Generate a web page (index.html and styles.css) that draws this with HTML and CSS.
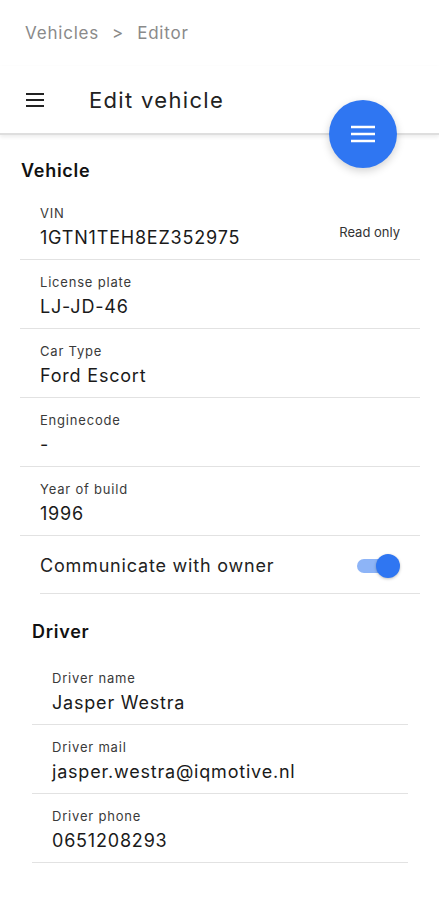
FILE: index.html
```html
<!DOCTYPE html>
<html lang="en">
<head>
  <meta charset="UTF-8">
  <title>Edit vehicle</title>
  <link rel="stylesheet" href="styles.css">
</head>
<body>

  <div class="breadcrumb">
    <span>Vehicles</span>
    <span class="sep">&gt;</span>
    <span>Editor</span>
  </div>

  <header class="toolbar">
    <svg class="menu-icon" width="24" height="24" viewBox="0 0 24 24">
      <path d="M3 6h18M3 12h18M3 18h18" stroke="#222" stroke-width="2"/>
    </svg>
    <h1>Edit vehicle</h1>
    <button class="fab">
      <svg width="26" height="18" viewBox="0 0 26 18">
        <path d="M1 2h24M1 9h24M1 16h24" stroke="#fff" stroke-width="2.4"/>
      </svg>
    </button>
  </header>

  <main>
    <section class="group vehicle">
      <h2>Vehicle</h2>

      <div class="field">
        <div class="field-text">
          <label>VIN</label>
          <div class="value">1GTN1TEH8EZ352975</div>
        </div>
        <span class="hint">Read only</span>
      </div>
      <div class="field">
        <div class="field-text">
          <label>License plate</label>
          <div class="value">LJ-JD-46</div>
        </div>
      </div>
      <div class="field">
        <div class="field-text">
          <label>Car Type</label>
          <div class="value">Ford Escort</div>
        </div>
      </div>
      <div class="field">
        <div class="field-text">
          <label>Enginecode</label>
          <div class="value">-</div>
        </div>
      </div>
      <div class="field">
        <div class="field-text">
          <label>Year of build</label>
          <div class="value">1996</div>
        </div>
      </div>

      <div class="switch-row">
        <span>Communicate with owner</span>
        <span class="switch on"><span class="thumb"></span></span>
      </div>
    </section>

    <section class="group driver">
      <h2>Driver</h2>

      <div class="field">
        <div class="field-text">
          <label>Driver name</label>
          <div class="value">Jasper Westra</div>
        </div>
      </div>
      <div class="field">
        <div class="field-text">
          <label>Driver mail</label>
          <div class="value">jasper.westra@iqmotive.nl</div>
        </div>
      </div>
      <div class="field">
        <div class="field-text">
          <label>Driver phone</label>
          <div class="value">0651208293</div>
        </div>
      </div>
    </section>
  </main>

</body>
</html>
```

FILE: styles.css
```css
* { box-sizing: border-box; margin: 0; padding: 0; }

body {
  font-family: Inter, "Noto Sans", sans-serif;
  letter-spacing: 0.05em;
  color: #1c1c1c;
  background: #fff;
}

.breadcrumb {
  height: 66px;
  padding-left: 25px;
  display: flex;
  align-items: center;
  gap: 13px;
  font-size: 17px;
  color: #8a8a8a;
}

.toolbar {
  position: relative;
  height: 69px;
  display: flex;
  align-items: center;
  padding-left: 23px;
  border-bottom: 2px solid #dedede;
  box-shadow: 0 2px 4px rgba(0, 0, 0, 0.08);
}

.menu-icon {
  margin-right: 42px;
}

.toolbar h1 {
  font-size: 22px;
  font-weight: 400;
  letter-spacing: 0.06em;
  color: #222;
}

.fab {
  position: absolute;
  right: 42px;
  bottom: -35px;
  width: 68px;
  height: 68px;
  border: none;
  border-radius: 50%;
  background: #2f76f2;
  display: flex;
  align-items: center;
  justify-content: center;
  box-shadow: 0 3px 8px rgba(0, 0, 0, 0.18);
  z-index: 2;
}

.group h2 {
  font-size: 18px;
  font-weight: 600;
  line-height: 24px;
  letter-spacing: 0.04em;
  color: #111;
}

.vehicle {
  margin: 0 19px 0 20px;
}

.vehicle h2 {
  padding: 24px 0 8px 1px;
}

.driver {
  margin: 0 31px 0 32px;
}

.driver h2 {
  padding: 26px 0 12px;
}

.field {
  display: flex;
  align-items: flex-start;
  padding: 12px 20px 7px;
  border-bottom: 1px solid #e2e2e2;
}

.field-text {
  flex-grow: 1;
}

.field label {
  display: block;
  font-size: 13px;
  line-height: 20px;
  color: #3a3a3a;
}

.field .value {
  margin-top: 1px;
  font-size: 18px;
  line-height: 28px;
  color: #1a1a1a;
}

.hint {
  font-size: 13px;
  letter-spacing: 0;
  color: #333;
  margin-top: 21px;
}

.switch-row {
  margin-left: 20px;
  height: 58px;
  display: flex;
  align-items: center;
  justify-content: space-between;
  padding: 2px 20px 0 0;
  border-bottom: 1px solid #e2e2e2;
  font-size: 18px;
  color: #222;
}

.switch {
  position: relative;
  width: 36px;
  height: 14px;
  margin-right: 7px;
  border-radius: 7px;
  background: #8db4f7;
}

.switch .thumb {
  position: absolute;
  right: -7px;
  top: -5px;
  width: 24px;
  height: 24px;
  border-radius: 50%;
  background: #2f76f2;
  box-shadow: 0 1px 3px rgba(0, 0, 0, 0.25);
}
```
